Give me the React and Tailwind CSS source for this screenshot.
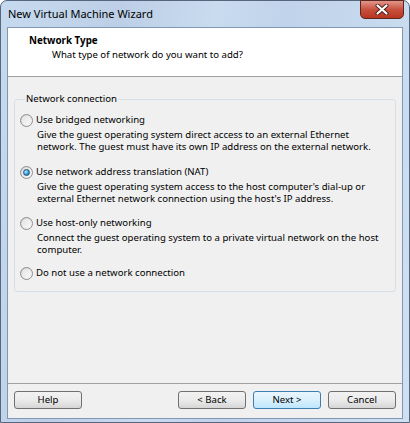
import React from "react";

const font = { fontFamily: '"Noto Sans", "Open Sans", sans-serif' };

function Radio({ checked }) {
  return (
    <span className="relative flex h-[13px] w-[13px] shrink-0 items-center justify-center rounded-full border border-[#8e8f8f] bg-gradient-to-br from-[#d0d0d0] to-[#fbfbfb]">
      <span className="flex h-[9px] w-[9px] items-center justify-center rounded-full bg-gradient-to-br from-[#e4e4e4] to-[#f8f8f8]">
        {checked && (
          <span className="h-[7px] w-[7px] rounded-full border border-[#1c5180] bg-[radial-gradient(circle_at_35%_35%,#c8ecff_0%,#49a8e8_45%,#1a5c98_100%)]" />
        )}
      </span>
    </span>
  );
}

function Option({ label, desc, checked, mt }) {
  return (
    <div className={mt}>
      <div className="flex h-[14px] items-center">
        <Radio checked={checked} />
        <span className="ml-[3px] text-[9.6px] leading-[14px] text-black">{label}</span>
      </div>
      {desc && (
        <div className="mt-[2px] pl-[17px] text-[9.6px] leading-[12px] text-black">{desc}</div>
      )}
    </div>
  );
}

function Btn({ children, primary }) {
  return (
    <div
      className={
        "flex h-[18px] w-[68px] items-center justify-center rounded-[3px] border text-[9.6px] text-black " +
        (primary
          ? "border-[#3c7fb1] bg-gradient-to-b from-[#eaf6fd] via-[#d9f0fc] to-[#bee6fd]"
          : "border-[#707070] bg-gradient-to-b from-[#f2f2f2] via-[#ebebeb] to-[#d6d6d6]")
      }
    >
      {children}
    </div>
  );
}

export default function App() {
  return (
    <div className="w-[410px] h-[423px] overflow-hidden" style={font}>
      <div className="flex h-[423px] w-[410px] flex-col rounded-t-[7px] border border-[#56667d] bg-[linear-gradient(100deg,#c6daef_0%,#bccfe6_25%,#c9dbef_45%,#c0d3ea_60%,#cfe0f2_100%)]">
        <div className="flex h-[26px] items-start">
          <div className="pl-[7px] pt-[5px] text-[11px] leading-[15px] text-black">New Virtual Machine Wizard</div>
          <div className="ml-auto mr-[5px] -mt-[1px] flex h-[19px] w-[44px] items-center justify-center rounded-b-[5px] border border-[#5b2620] bg-gradient-to-b from-[#e2958a] via-[#c8503f] to-[#b8341f]">
            <svg width="14" height="11" viewBox="0 0 14 11">
              <path d="M2.5 1.5 L11.5 9.5 M11.5 1.5 L2.5 9.5" stroke="#4a1f1a" strokeWidth="4" strokeLinecap="round" />
              <path d="M2.5 1.5 L11.5 9.5 M11.5 1.5 L2.5 9.5" stroke="#ffffff" strokeWidth="2.2" strokeLinecap="round" />
            </svg>
          </div>
        </div>
        <div className="mx-[6px] flex h-[392px] flex-col border border-[#8197b3] bg-[#f0f0f0]">
          <div className="h-[49px] border-b border-[#a0a0a0] bg-white pt-[6px]">
            <div className="pl-[21px] text-[9.8px] font-bold leading-[14px] text-black">Network Type</div>
            <div className="pl-[44px] text-[9.6px] leading-[14px] text-black">What type of network do you want to add?</div>
          </div>
          <div className="flex flex-1 flex-col">
            <fieldset className="mx-[6px] mt-[16px] h-[199px] rounded-[3px] border border-[#d5dfe5] pl-[5px]">
              <legend className="ml-[5px] px-[1px] text-[9.6px] leading-[12px] text-black">Network connection</legend>
              <Option
                mt="mt-[8px]"
                label="Use bridged networking"
                desc={<>Give the guest operating system direct access to an external Ethernet<br />network. The guest must have its own IP address on the external network.</>}
              />
              <Option
                mt="mt-[12px]"
                checked
                label="Use network address translation (NAT)"
                desc={<>Give the guest operating system access to the host computer's dial-up or<br />external Ethernet network connection using the host's IP address.</>}
              />
              <Option
                mt="mt-[11px]"
                label="Use host-only networking"
                desc={<>Connect the guest operating system to a private virtual network on the host<br />computer.</>}
              />
              <Option mt="mt-[10px]" label="Do not use a network connection" />
            </fieldset>
            <div className="flex-1" />
            <div className="h-[1px] bg-[#a0a0a0]" />
            <div className="flex items-center px-[6px] pb-[9px] pt-[7px]">
              <Btn>Help</Btn>
              <div className="flex-1" />
              <div className="flex gap-[7px]">
                <Btn>&lt; Back</Btn>
                <Btn primary>Next &gt;</Btn>
                <Btn>Cancel</Btn>
              </div>
            </div>
          </div>
        </div>
      </div>
    </div>
  );
}
